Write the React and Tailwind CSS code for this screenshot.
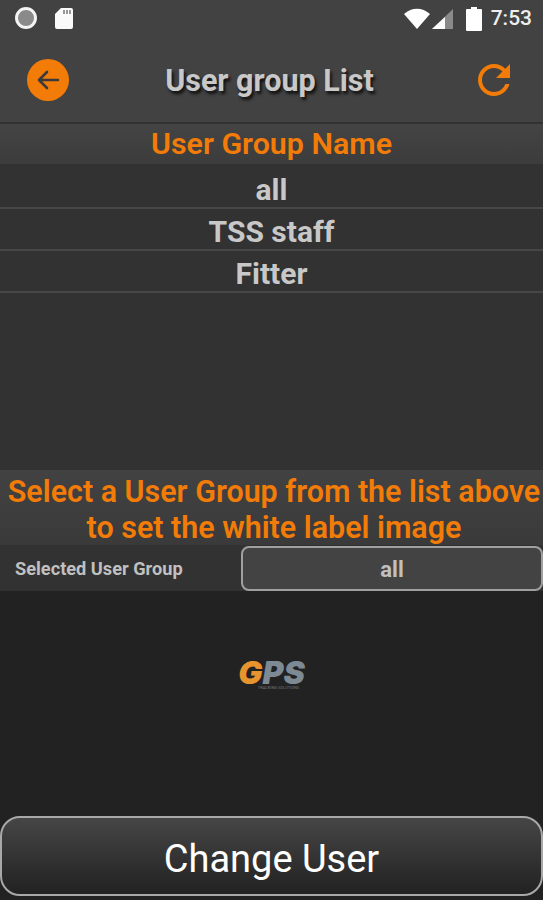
const GROUPS = ['all', 'TSS staff', 'Fitter'];
const ROBOTO = { fontFamily: 'Roboto, sans-serif' };

const StatusBar = () => (
  <div className="flex items-center h-[38px] pl-[15px] pr-[11px] text-white">
    <svg width="24" height="24" viewBox="0 0 24 24" className="mr-[15px]">
      <circle cx="11" cy="11" r="9.5" fill="#8a8a8a" stroke="#f4f4f4" strokeWidth="3" />
    </svg>
    <svg width="20" height="24" viewBox="0 0 20 24">
      <path d="M7 1h10a2 2 0 0 1 2 2v17a2 2 0 0 1-2 2H3a2 2 0 0 1-2-2V7z" fill="#fafafa" />
      <path d="M10 3v4M13 3v4M16 3v4" stroke="#777" strokeWidth="1.5" />
    </svg>
    <div className="flex-1" />
    <svg width="28" height="22" viewBox="0 0 28 22" className="mr-[1px]">
      <path d="M1 6C9-1 19-1 27 6L14 21z" fill="#fff" />
    </svg>
    <svg width="22" height="22" viewBox="0 0 22 22" className="mr-[11px]">
      <path d="M0 21 21 1v20z" fill="#8a8a8a" />
      <path d="M0 21 13 9v12z" fill="#fff" />
    </svg>
    <svg width="18" height="24" viewBox="0 0 18 24" className="mr-[8px]">
      <path d="M6 0h6v2h4a1 1 0 0 1 1 1v20a1 1 0 0 1-1 1H2a1 1 0 0 1-1-1V3a1 1 0 0 1 1-1h4z" fill="#fff" />
    </svg>
    <span className="text-[21px] font-medium text-[#eeeeee]" style={ROBOTO}>7:53</span>
  </div>
);

const Header = () => (
  <div className="flex items-center justify-between h-[84px] pl-[27px] pr-[25px]">
    <div className="flex items-center justify-center w-[42px] h-[42px] rounded-full bg-[#f27c07]">
      <svg width="28" height="28" viewBox="0 0 28 28" fill="none" stroke="#3a3a3a" strokeWidth="2.6" strokeLinecap="round" strokeLinejoin="round">
        <path d="M24 14H6M13 6l-8 8 8 8" />
      </svg>
    </div>
    <h1 className="pt-[2px] text-[30.5px] leading-[40px] font-bold text-[#c8c8c8] [text-shadow:2px_3px_3px_#111]">User group List</h1>
    {/* refresh glyph, filled like the material one */}
    <svg width="48" height="48" viewBox="0 0 24 24" fill="#f27c07">
      <path d="M17.65 6.35C16.2 4.9 14.21 4 12 4c-4.42 0-7.99 3.58-7.99 8s3.57 8 7.99 8c3.73 0 6.84-2.55 7.73-6h-2.08c-.82 2.33-3.04 4-5.65 4-3.31 0-6-2.69-6-6s2.69-6 6-6c1.66 0 3.14.69 4.22 1.78L13 11h7V4l-2.35 2.35z" />
    </svg>
  </div>
);

export default function App() {
  return (
    <div className="flex flex-col w-[543px] h-[900px] overflow-hidden bg-[#222222] font-['Roboto',sans-serif]">
      <div className="h-[122px] bg-[#424242] shrink-0">
        <StatusBar />
        <Header />
      </div>

      <div className="h-[348px] shrink-0 bg-[#323232]">
        <div className="flex items-center justify-center h-[40px] mt-[2px] bg-gradient-to-b from-[#444444] to-[#3c3c3c] text-[30.4px] font-semibold text-[#f27c07]">
          User Group Name
        </div>
        <div>
          {GROUPS.map((g) => (
            <div key={g} className="flex items-center justify-center h-[42px] pt-[6px] first:h-[45px] first:pt-[8px] border-b-2 border-[#474747] text-[30px] leading-[34px] font-bold text-[#c8c8c8]">
              {g}
            </div>
          ))}
        </div>
      </div>

      <div className="flex flex-col items-center justify-center h-[75px] pt-[5px] pl-[5px] shrink-0 bg-gradient-to-b from-[#424242] to-[#3a3a3a] text-[30.45px] leading-[36px] font-semibold text-[#f27c07] whitespace-nowrap">
        <div>Select a User Group from the list above</div>
        <div>to set the white label image</div>
      </div>

      <div className="flex items-center h-[46px] shrink-0 bg-[#323232]">
        <div className="w-[241px] pl-[15px] pt-[2px] text-[18.2px] font-bold text-[#c0c0c0]">Selected User Group</div>
        <div className="flex-1 flex items-center justify-center h-[45px] pt-[3px] rounded-[8px] border-2 border-[#a0a0a0] bg-[#434343] text-[22px] font-bold text-[#c0c0c0]">
          all
        </div>
      </div>

      <div className="flex-1 flex flex-col items-center justify-center pb-[56px]">
        <div className="flex h-[23px] text-[32px] leading-[23px] font-['Inter',sans-serif] font-black italic">
          <span className="text-[#e8942e]">G</span>
          <span className="text-[#7d8a93]">PS</span>
        </div>
        <div className="ml-[14px] mt-[1px] text-[4px] leading-[5px] text-[#777777]">TRACKING SOLUTIONS</div>
      </div>

      <button className="h-[80px] shrink-0 mb-[4px] pt-[5px] rounded-[20px] border-2 border-[#a8a8a8] bg-gradient-to-b from-[#464646] to-[#222222] text-[38px] leading-[44px] text-white">
        Change User
      </button>
    </div>
  );
}
